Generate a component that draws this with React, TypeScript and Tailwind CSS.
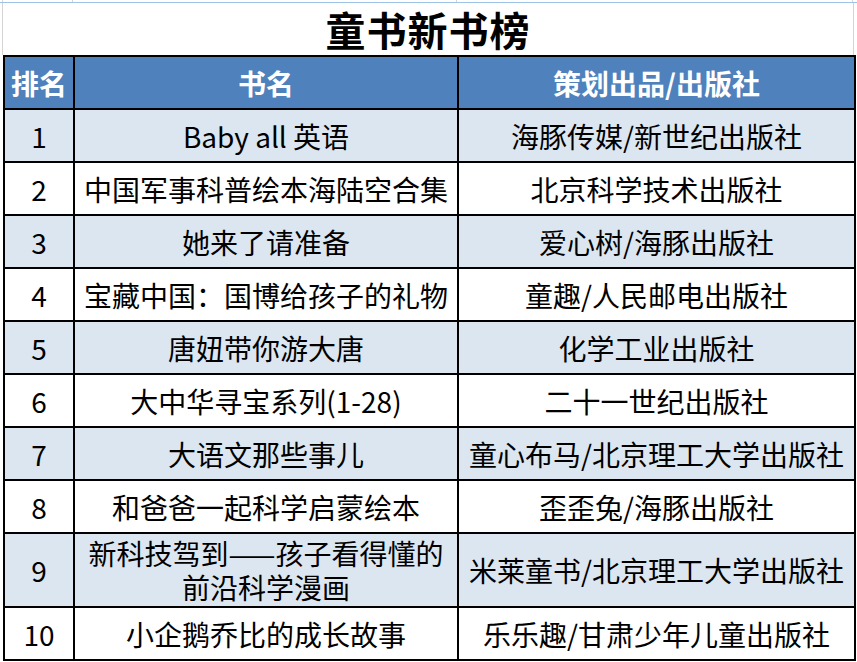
const rows: { rank: string; title: React.ReactNode; publisher: string; tall?: boolean }[] = [
  { rank: '1', title: 'Baby all 英语', publisher: '海豚传媒/新世纪出版社' },
  { rank: '2', title: '中国军事科普绘本海陆空合集', publisher: '北京科学技术出版社' },
  { rank: '3', title: '她来了请准备', publisher: '爱心树/海豚出版社' },
  { rank: '4', title: '宝藏中国：国博给孩子的礼物', publisher: '童趣/人民邮电出版社' },
  { rank: '5', title: '唐妞带你游大唐', publisher: '化学工业出版社' },
  { rank: '6', title: '大中华寻宝系列(1-28)', publisher: '二十一世纪出版社' },
  { rank: '7', title: '大语文那些事儿', publisher: '童心布马/北京理工大学出版社' },
  { rank: '8', title: '和爸爸一起科学启蒙绘本', publisher: '歪歪兔/海豚出版社' },
  {
    rank: '9',
    title: (
      <>
        新科技驾到——孩子看得懂的
        <br />
        前沿科学漫画
      </>
    ),
    publisher: '米莱童书/北京理工大学出版社',
    tall: true,
  },
  { rank: '10', title: '小企鹅乔比的成长故事', publisher: '乐乐趣/甘肃少年儿童出版社' },
];

export default function App() {
  return (
    <div
      className="w-[857px] h-[662px] bg-white overflow-hidden text-black"
      style={{ fontFamily: '"Noto Sans CJK SC", "Noto Sans", sans-serif' }}
    >
      {/* 表格上方的网格线 */}
      <div className="flex h-[2px]">
        <div className="w-[3px] border-r border-[#d4d4d4]" />
        <div className="w-[70px] border-r border-[#d4d4d4]" />
        <div className="w-[384px] border-r border-[#d4d4d4]" />
        <div className="w-[396px] border-r border-[#d4d4d4]" />
      </div>
      <div className="h-px bg-[#9dc3e6]" />

      {/* 标题 */}
      <div className="flex h-[52px]">
        <div className="w-[3px] border-r border-[#d4d4d4]" />
        <div className="w-[850px] flex items-center justify-center text-[40px] font-bold leading-none tracking-[1px]">
          童书新书榜
        </div>
        <div className="flex-1 border-l border-[#d4d4d4]" />
      </div>

      <div className="pl-[3px]">
        <table className="border-collapse table-fixed w-[851px] text-[28px] leading-[34px]">
          <colgroup>
            <col className="w-[70px]" />
            <col className="w-[384px]" />
            <col className="w-[397px]" />
          </colgroup>
          <thead>
            <tr className="h-[53px] bg-[#4f81bd] text-white font-bold">
              <th className="border-2 border-black p-0 font-bold">排名</th>
              <th className="border-2 border-black p-0 font-bold">书名</th>
              <th className="border-2 border-black p-0 font-bold">策划出品/出版社</th>
            </tr>
          </thead>
          <tbody>
            {rows.map((r, i) => (
              <tr
                key={r.rank}
                className={`${r.tall ? 'h-[74px]' : 'h-[53px]'} ${i % 2 === 0 ? 'bg-[#dce6f1]' : 'bg-white'}`}
              >
                <td className="border-2 border-black p-0 text-center align-middle">{r.rank}</td>
                <td className="border-2 border-black p-0 text-center align-middle whitespace-nowrap">{r.title}</td>
                <td className="border-2 border-black p-0 text-center align-middle whitespace-nowrap">{r.publisher}</td>
              </tr>
            ))}
          </tbody>
        </table>
      </div>
    </div>
  );
}
